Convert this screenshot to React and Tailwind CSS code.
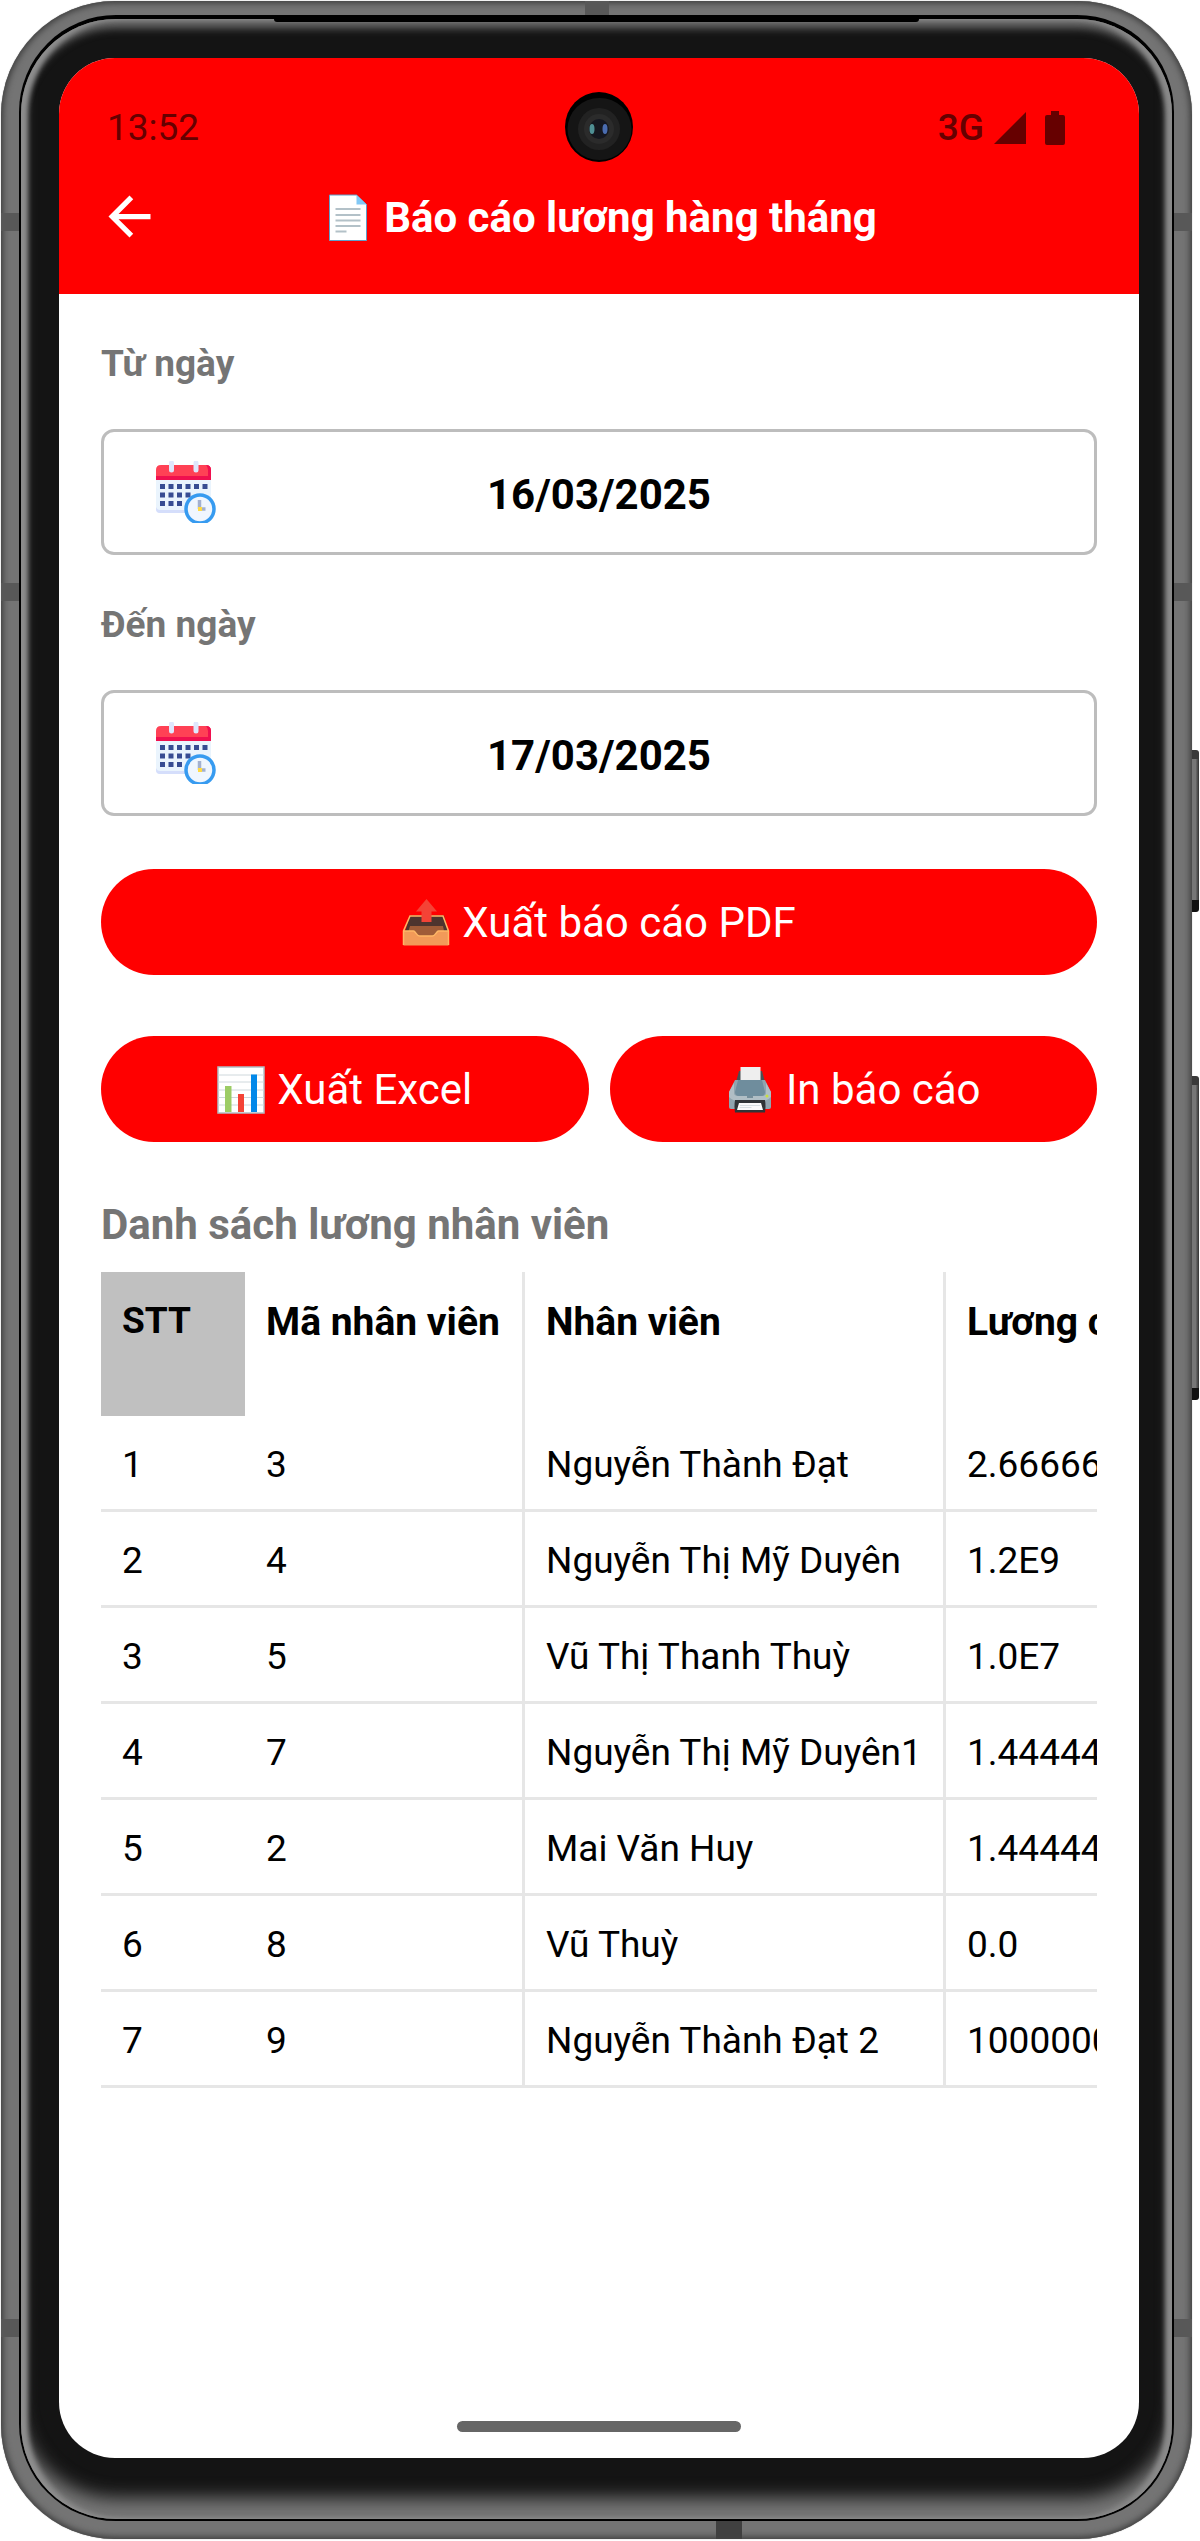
const employees = [
  { id: "3", name: "Nguyễn Thành Đạt", salary: "2.6666666E7" },
  { id: "4", name: "Nguyễn Thị Mỹ Duyên", salary: "1.2E9" },
  { id: "5", name: "Vũ Thị Thanh Thuỳ", salary: "1.0E7" },
  { id: "7", name: "Nguyễn Thị Mỹ Duyên1", salary: "1.4444444E7" },
  { id: "2", name: "Mai Văn Huy", salary: "1.4444444E7" },
  { id: "8", name: "Vũ Thuỳ", salary: "0.0" },
  { id: "9", name: "Nguyễn Thành Đạt 2", salary: "1000000000" },
];

function PageIcon() {
  return (
    <svg viewBox="0 0 48 48" className="size-12 shrink-0" aria-hidden="true">
      <path d="M5.5 1h27L42.500 10.500V46.500h-37z" fill="#fff" stroke="#5f9fca" />
      <path d="M32.500 1v9.500h10z" fill="#82c8f5" />
      <path
        d="M11.500 15h25M11.500 21h25M11.500 26.500h25M11.500 32h25M11.500 37.500h11"
        stroke="#b3c1c8"
        strokeWidth="1.800"
      />
    </svg>
  );
}

function OutboxIcon() {
  return (
    <svg viewBox="0 0 48 48" className="size-12 shrink-0" aria-hidden="true">
      <path d="M8 16.500h34l4 16H3z" fill="#4e342e" />
      <path d="M8 27h33l2 10H5z" fill="#a05c38" />
      <path
        d="M1.500 32h10c2 0 3 5 6 5h13c3 0 4-5 6-5h10v14.500h-45z"
        fill="#f29a59"
      />
      <path
        d="M1.500 46V32L8 17h33l5.500 15v14M1.500 32h10c2 0 3 5 6 5h13c3 0 4-5 6-5h10"
        fill="none"
        stroke="#ffb766"
        strokeWidth="1.500"
      />
      <path d="M24.500 0l10.500 12.500h-5.500V23h-10V12.500H14z" fill="#f44336" />
    </svg>
  );
}

function ChartIcon() {
  return (
    <svg viewBox="0 0 48 48" className="size-12 shrink-0" aria-hidden="true">
      <path d="M1 1h46v46H1z" fill="#fff" stroke="#b0bec5" strokeWidth="1.500" />
      <path d="M1 9h46M1 16h46M1 24h46M1 31.500h46M1 39h46" stroke="#cfd8dc" />
      <path d="M8 20h6.500v26H8z" fill="#9ccc65" />
      <path d="M21 28h6v18h-6z" fill="#f44336" />
      <path d="M34 8.500h6V46h-6z" fill="#0288e9" />
    </svg>
  );
}

function PrinterIcon() {
  return (
    <svg viewBox="0 0 48 48" className="size-12 shrink-0" aria-hidden="true">
      <path d="M13 5h23l3 11H10z" fill="#4a4f52" />
      <path d="M14.500 1h20v14h-20z" fill="#eee" />
      <path d="M9 14h30l6 12v15q0 2-2 2H5q-2 0-2-2V26z" fill="#90a4ae" />
      <path d="M3 26l5-9v10q0 3 4 3h24q4 0 4-3V17l5 9v5q-4 4-9 4H12q-5 0-9-4z" fill="#b0bec5" />
      <path d="M12 14h24l3 12q0 4-4 4H13q-4 0-4-4z" fill="#6f8d9d" />
      <path d="M21 31h6" stroke="#607d8b" strokeWidth="1.500" />
      <path d="M9 34h30q1 6 0 12.500H9q-1-6.500 0-12.500z" fill="#303437" />
      <path d="M13 37h22l2 7H11z" fill="#fafafa" />
      <path d="M14 39.500h20M13.500 41.500h12" stroke="#cfd8dc" strokeWidth="0.800" />
      <circle cx="41" cy="30" r="1.500" fill="#c6e03c" />
    </svg>
  );
}

function CalendarIcon() {
  return (
    <svg viewBox="0 0 62 62" className="size-[62px] shrink-0" aria-hidden="true">
      <path d="M1 18h55v30q0 4-4 4H5q-4 0-4-4z" fill="#eaf4fd" />
      <path d="M1 46v2q0 4 4 4h47q4 0 4-4v-2q-1 3-4 3H5q-3 0-4-3z" fill="#d5defb" />
      <path d="M1 19V9q0-5 5-5h45q5 0 5 5v10z" fill="#ff4155" />
      <path d="M1 15h55v4H1z" fill="#f0104f" />
      <path d="M51 4q5 0 5 5v10h-3V9q0-3-2-5z" fill="#f0104f" />
      <path d="M16.500 2v7M41 2v7" stroke="#dfe7fd" strokeWidth="5" strokeLinecap="round" />
      <path
        d="M5 25.500h49M5 34h33M5 42.500h24"
        stroke="#374c92"
        strokeWidth="5"
        strokeDasharray="5 3.500"
      />
      <circle cx="45" cy="48" r="14" fill="#f0f6fe" stroke="#379bf0" strokeWidth="3.500" />
      <path d="M44.500 39v9" stroke="#a3b0cf" strokeWidth="3.500" />
      <path d="M45 48h5.500" stroke="#a3b0cf" strokeWidth="3.500" />
      <path d="M43 46h4v4h-4z" fill="#ffda44" />
    </svg>
  );
}

function DateField({ id, label, value }) {
  return (
    <div className="pt-[46px]">
      <label htmlFor={id} className="block text-[37px] leading-[48px] font-bold text-[#757575]">
        {label}
      </label>
      <div className="mt-[41px] flex h-[126px] items-center rounded-[13px] border-[3px] border-[#bdbdbd] pr-[113px] pl-[51px]">
        <CalendarIcon />
        <input
          id={id}
          type="text"
          defaultValue={value}
          className="min-w-0 flex-1 bg-transparent pt-[6px] text-center text-[42px] leading-[56px] font-bold text-black outline-none"
        />
      </div>
    </div>
  );
}

function PillButton({ icon, children }) {
  return (
    <button
      type="button"
      className="flex h-[106px] w-full items-center justify-center gap-3 rounded-full bg-[#ff0000] pt-[2px] text-[42px] leading-[56px] text-white"
    >
      {icon}
      {children}
    </button>
  );
}

function StatusBar() {
  return (
    <div className="flex h-11 items-center justify-between pr-[74px] pl-[48px] text-[37px] leading-[44px] text-[#660000]">
      <span>13:52</span>
      <span className="flex items-center gap-[10px] font-medium">
        3G
        <svg viewBox="0 0 32 32" className="size-8" aria-hidden="true">
          <path d="M32 0v32H0z" fill="currentColor" />
        </svg>
        <svg viewBox="0 0 20 34" className="ml-[9px] h-[34px] w-5" aria-hidden="true">
          <path d="M6 0h8v4h4q2 0 2 2v26q0 2-2 2H2q-2 0-2-2V6q0-2 2-2h4z" fill="currentColor" />
        </svg>
      </span>
    </div>
  );
}

function Camera() {
  return (
    <svg
      viewBox="0 0 68 70"
      className="absolute top-[34px] left-1/2 h-[70px] w-[68px] -translate-x-1/2"
      aria-hidden="true"
    >
      <ellipse cx="34" cy="35" rx="34" ry="35" fill="#000" />
      <ellipse cx="34.500" cy="37" rx="32" ry="31" fill="#151515" />
      <circle cx="34" cy="37" r="21" fill="#222" />
      <circle cx="34" cy="37" r="15" fill="#2b2b2b" />
      <circle cx="34" cy="37" r="10" fill="#15171f" />
      <ellipse cx="27" cy="37" rx="2.500" ry="5" fill="#4f8f94" />
      <ellipse cx="40" cy="37" rx="2.500" ry="5" fill="#4a6cb0" />
    </svg>
  );
}

const cell = "pl-[21px] pr-4 pt-[25px] text-left align-top whitespace-nowrap";
const ruled = "border-r-[3px] border-[#e6e6e6]";
const bodyCell = "border-b-[3px] border-[#e6e6e6] pb-5 font-normal";

function SalaryTable() {
  return (
    <div className="mt-[19px] overflow-hidden">
      <table className="w-max border-separate border-spacing-0 text-[37px] leading-[48px] text-black">
        <thead>
          <tr className="h-36">
            <th scope="col" className={`${cell} w-36 bg-[#c0c0c0] font-bold`}>STT</th>
            <th scope="col" className={`${cell} ${ruled} w-[280px] text-[39px] leading-[50px] font-bold`}>
              Mã nhân viên
            </th>
            <th scope="col" className={`${cell} ${ruled} w-[421px] text-[39px] leading-[50px] font-bold`}>
              Nhân viên
            </th>
            <th scope="col" className={`${cell} text-[39px] leading-[50px] font-bold`}>Lương cơ bản</th>
          </tr>
        </thead>
        <tbody>
          {employees.map((e, i) => (
            <tr key={e.id}>
              <td className={`${cell} ${bodyCell}`}>{i + 1}</td>
              <td className={`${cell} ${bodyCell} ${ruled}`}>{e.id}</td>
              <td className={`${cell} ${bodyCell} ${ruled}`}>{e.name}</td>
              <td className={`${cell} ${bodyCell}`}>{e.salary}</td>
            </tr>
          ))}
        </tbody>
      </table>
    </div>
  );
}

function Screen() {
  return (
    <div className="relative flex min-w-0 flex-1 flex-col overflow-hidden rounded-[56px] bg-white">
      <header className="bg-[#ff0000] pt-12 pb-3 text-white">
        <StatusBar />
        <Camera />
        <div className="flex h-[132px] items-center px-[39px]">
          <button type="button" aria-label="Quay lại" className="size-[63px] shrink-0">
            <svg viewBox="0 0 24 24" className="size-full" fill="currentColor" aria-hidden="true">
              <path d="M20 11H7.830l5.590-5.590L12 4l-8 8 8 8 1.410-1.410L7.830 13H20z" />
            </svg>
          </button>
          <h1 className="flex flex-1 items-center justify-center gap-3 pt-[3px] pr-[60px] text-[42px] leading-[56px] font-bold">
            <PageIcon />
            Báo cáo lương hàng tháng
          </h1>
        </div>
      </header>
      <main className="flex-1 px-[42px]">
        <DateField id="from-date" label="Từ ngày" value="16/03/2025" />
        <DateField id="to-date" label="Đến ngày" value="17/03/2025" />
        <div className="mt-[53px]">
          <PillButton icon={<OutboxIcon />}>Xuất báo cáo PDF</PillButton>
        </div>
        <div className="mt-[61px] grid grid-cols-2 gap-[21px]">
          <PillButton icon={<ChartIcon />}>Xuất Excel</PillButton>
          <PillButton icon={<PrinterIcon />}>In báo cáo</PillButton>
        </div>
        <h2 className="mt-[55px] text-[42px] leading-[56px] font-bold text-[#757575]">
          Danh sách lương nhân viên
        </h2>
        <SalaryTable />
      </main>
      <div className="mx-auto mb-[26px] h-[11px] w-[284px] rounded-full bg-[#666]" />
    </div>
  );
}

function SideKey({ className }) {
  return (
    <div
      className={`absolute right-[-7px] w-[7px] rounded-r-[3px] border-t-[9px] border-b-[12px] border-t-[#3a3a3a] border-b-[#111] bg-linear-to-r from-[#777] via-[#777] to-[#333] ${className}`}
    />
  );
}

export default function App() {
  return (
    <div className="flex min-h-screen overflow-hidden bg-white pt-px pr-2 pb-[2px] pl-px font-['Roboto',sans-serif]">
      <div className="relative flex min-w-0 flex-1 flex-col rounded-[114px] bg-[#747474] pt-[14px] pr-[18px] pb-[18px] pl-[18px] shadow-[inset_0_0_6px_2px_#3c3c3c,0_0_1px_#777]">
        <div className="absolute top-[212px] left-0 h-[18px] w-full bg-[#585858]" />
        <div className="absolute top-[582px] left-0 h-[18px] w-full bg-[#585858]" />
        <div className="absolute bottom-[202px] left-0 h-[18px] w-full bg-[#585858]" />
        <div className="absolute top-0 left-[49%] h-4 w-6 bg-[#585858]" />
        <div className="absolute bottom-0 left-[60%] h-5 w-[26px] bg-[#404040]" />
        <SideKey className="top-[749px] h-[162px]" />
        <SideKey className="top-[1075px] h-[324px]" />
        <div className="relative flex min-w-0 flex-1 flex-col rounded-[97px] bg-black px-[2px] pt-1 pb-[2px]">
          <div className="relative flex min-w-0 flex-1 flex-col rounded-[95px] bg-[#141414] pt-[39px] pr-[33px] pb-[61px] pl-[38px] shadow-[inset_7px_0_5px_0_#8e8e8e,inset_-7px_0_5px_0_#8a8a8a,inset_0_9px_9px_0_#6c6c6c,inset_0_-24px_18px_-3px_#777]">
            <div className="absolute top-0 right-[22%] left-[22%] h-[3px] rounded-b-sm bg-black" />
            <Screen />
          </div>
        </div>
      </div>
    </div>
  );
}
